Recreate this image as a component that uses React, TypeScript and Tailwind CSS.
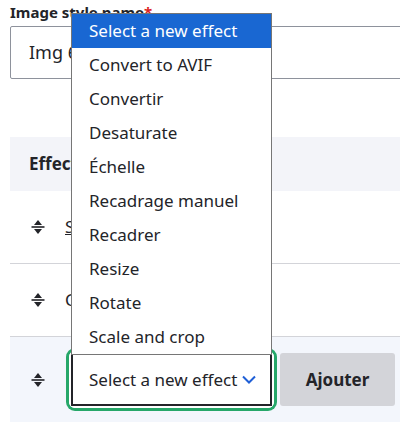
import React from 'react';

const options = [
  'Select a new effect',
  'Convert to AVIF',
  'Convertir',
  'Desaturate',
  'Échelle',
  'Recadrage manuel',
  'Recadrer',
  'Resize',
  'Rotate',
  'Scale and crop',
];

const DragHandle: React.FC = () => (
  <svg width="14" height="16" viewBox="0 0 14 16" className="text-[#232429]">
    <path d="M7 1 L11 6 H3 Z" fill="currentColor" />
    <rect x="0.5" y="7.2" width="13" height="1.6" fill="currentColor" />
    <path d="M7 15 L11 10 H3 Z" fill="currentColor" />
  </svg>
);

const App: React.FC = () => {
  return (
    <div className="relative w-[400px] h-[422px] overflow-hidden bg-white text-[#232429] font-['Noto_Sans',sans-serif]">
      <div className="pl-[10px]">
        <label className="block h-[26px] pt-[1px] text-[15px] font-bold leading-[22px]">
          Image style name<span className="text-[#dc2323]">*</span>
        </label>
        <div className="h-[53px] w-[420px] rounded-[2px] border border-[#8e929c] flex items-center pl-[18px] text-[18px]">
          Img 6
        </div>

        <div className="mt-[58px] w-[400px]">
          <div className="h-[54px] bg-[#f3f4f9] flex items-center pl-[19px] text-[17px] font-bold">Effect</div>
          <div className="h-[73px] border-b border-[#d3d4d9] flex items-center">
            <div className="w-[55px] flex justify-center pl-[1px]">
              <DragHandle />
            </div>
            <span className="text-[17px] underline">Scale 100×100</span>
          </div>
          <div className="h-[73px] border-b border-[#d3d4d9] flex items-center">
            <div className="w-[55px] flex justify-center pl-[1px]">
              <DragHandle />
            </div>
            <span className="text-[17px]">Convertir AVIF</span>
          </div>
          <div className="h-[86px] bg-[#f3f6fc] flex items-center pb-[1px]">
            <div className="w-[55px] flex justify-center pl-[1px]">
              <DragHandle />
            </div>
            <div className="ml-[4px] rounded-[6px] ring-[3px] ring-[#26a769] border-2 border-white">
              <div className="w-[201px] h-[53px] border-2 border-[#232429] bg-white flex items-center pl-[16px] text-[17px]">
                Select a new effect
                <svg width="14" height="9" viewBox="0 0 14 9" className="ml-[5px]">
                  <path d="M1 1.5 L7 7.5 L13 1.5" fill="none" stroke="#1f5fd6" strokeWidth="2" />
                </svg>
              </div>
            </div>
            <button className="ml-[6px] w-[115px] h-[53px] rounded-[3px] bg-[#d3d4d9] text-[17px] font-bold">
              Ajouter
            </button>
          </div>
        </div>
      </div>

      <ul className="absolute left-[71px] top-[13px] w-[201px] border border-[#767676] bg-white text-[17px]">
        {options.map((o, i) => (
          <li
            key={o}
            className={
              i === 0
                ? 'h-[34px] flex items-center pl-[17px] bg-[#1967d2] text-white'
                : 'h-[34px] flex items-center pl-[17px] text-[#232429]'
            }
          >
            {o}
          </li>
        ))}
      </ul>
    </div>
  );
};

export default App;
